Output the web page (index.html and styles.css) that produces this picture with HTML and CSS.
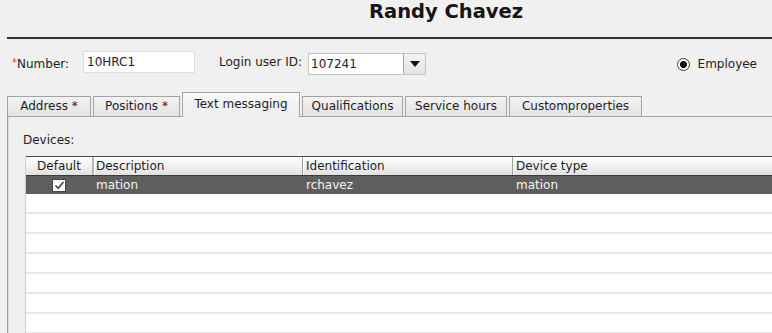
FILE: index.html
```html
<!DOCTYPE html>
<html lang="en">
<head>
	<meta charset="UTF-8">
	<title>Randy Chavez</title>
	<link rel="stylesheet" href="styles.css">
</head>
<body>
<div class="title">Randy Chavez</div>
<div class="rule"></div>

<div class="form-row">
	<label class="field-label num-label"><span class="req">*</span>Number:</label>
	<div class="textbox">10HRC1</div>
	<label class="field-label login-label">Login user ID:</label>
	<div class="combo">
		<span class="combo-text">107241</span>
		<span class="combo-btn"><span class="arrow"></span></span>
	</div>
	<div class="radio-opt"><span class="radio"></span>Employee</div>
</div>

<ul class="tabs">
	<li class="tab tab-address">Address *</li>
	<li class="tab tab-positions">Positions *</li>
	<li class="tab tab-text current">Text messaging</li>
	<li class="tab tab-qual">Qualifications</li>
	<li class="tab tab-hours">Service hours</li>
	<li class="tab tab-custom">Customproperties</li>
</ul>

<div class="panel">
	<div class="devices-label">Devices:</div>
	<div class="grid">
		<div class="grid-head">
			<span class="cell col-default">Default</span>
			<span class="cell">Description</span>
			<span class="cell">Identification</span>
			<span class="cell">Device type</span>
		</div>
		<div class="grid-row selected">
			<span class="cell col-default">
				<span class="checkbox">
					<svg width="11" height="11" viewBox="0 0 11 11"><polyline points="1.5,5.5 4.2,8.2 9.5,2" fill="none" stroke="#333" stroke-width="1.4"/></svg>
				</span>
			</span>
			<span class="cell">mation</span>
			<span class="cell">rchavez</span>
			<span class="cell">mation</span>
		</div>
		<div class="grid-row"></div>
		<div class="grid-row"></div>
		<div class="grid-row"></div>
		<div class="grid-row"></div>
		<div class="grid-row"></div>
		<div class="grid-row"></div>
		<div class="grid-row"></div>
	</div>
</div>
</body>
</html>
```

FILE: styles.css
```css
* {
	margin: 0;
	padding: 0;
	box-sizing: border-box;
}

ul {
	list-style: none;
}

body {
	width: 772px;
	height: 333px;
	overflow: hidden;
	background: #f0f0f0;
	color: #1e1e1e;
	font-family: "DejaVu Sans", "Liberation Sans", sans-serif;
	font-size: 12px;
}

/* header */
.title {
	height: 37px;
	padding-left: 369px;
	font-size: 19.5px;
	font-weight: bold;
	line-height: 23px;
	color: #151515;
}

.rule {
	height: 2px;
	margin-left: 7px;
	background: #333;
}

/* number / login row */
.form-row {
	display: flex;
	align-items: flex-start;
	height: 23px;
	margin-top: 12px;
	padding: 0 15px 0 12px;
}

.field-label {
	line-height: 23px;
	white-space: nowrap;
}

.num-label {
	width: 71px;
}

.req {
	color: #e23c3c;
	font-size: 10px;
	vertical-align: 2px;
}

.textbox {
	width: 112px;
	height: 22px;
	padding-left: 3px;
	line-height: 20px;
	background: #fff;
	border: 1px solid #dedede;
}

.login-label {
	width: 89px;
	margin-left: 24px;
}

.combo {
	display: flex;
	width: 118px;
	height: 22px;
	margin-top: 2px;
	background: #fff;
	border: 1px solid #c4c4c4;
}

.combo-text {
	flex: 1;
	padding-left: 2px;
	line-height: 20px;
}

.combo-btn {
	display: flex;
	align-items: center;
	justify-content: center;
	width: 22px;
	background: linear-gradient(#f4f4f4, #e2e2e2);
	border-left: 1px solid #a8a8a8;
}

.arrow {
	width: 0;
	height: 0;
	border-left: 5px solid transparent;
	border-right: 5px solid transparent;
	border-top: 6px solid #111;
}

.radio-opt {
	display: flex;
	align-items: center;
	gap: 8px;
	margin-left: auto;
	margin-top: 3px;
	line-height: 20px;
}

.radio {
	width: 13px;
	height: 13px;
	border: 1px solid #3a3a3a;
	border-radius: 50%;
	background: radial-gradient(circle, #111 0, #111 3.2px, #fff 3.8px);
}

/* tabs */
.tabs {
	display: flex;
	align-items: flex-end;
	gap: 2px;
	height: 24px;
	margin-top: 18px;
	padding-left: 7px;
}

.tab {
	height: 20px;
	line-height: 18px;
	text-align: center;
	white-space: nowrap;
	background: linear-gradient(#f3f3f3, #e3e3e3);
	border: 1px solid #a3a3a3;
	border-bottom: none;
}

.tab.current {
	position: relative;
	z-index: 1;
	height: 25px;
	margin-bottom: -1px;
	line-height: 22px;
	background: linear-gradient(#fafafa, #f0f0f0 60%);
}

.tab-address { width: 84px; }
.tab-positions { width: 87px; }
.tab-text { width: 118px; }
.tab-qual { width: 101px; }
.tab-hours { width: 102px; }
.tab-custom { width: 133px; }

/* panel */
.panel {
	height: 217px;
	margin-left: 7px;
	border-top: 1px solid #a3a3a3;
	border-left: 1px solid #9a9a9a;
	box-shadow: inset 1px 0 #dcdcdc;
	overflow: hidden;
}

.devices-label {
	margin: 15px 0 0 15px;
	line-height: 16px;
}

.grid {
	width: 780px;
	margin: 8px 0 0 17px;
	border-left: 1px solid #c9c9d6;
}

.grid-head,
.grid-row {
	display: grid;
	grid-template-columns: 66px 210px 210px 1fr;
}

.grid-head {
	height: 20px;
	background: linear-gradient(#fefefe, #f2f2f2 50%, #e0e0e0);
	border-top: 1px solid #4a4a4a;
	border-bottom: 1px solid #3c3c3c;
}

.cell {
	padding-left: 3px;
	line-height: 18px;
	white-space: nowrap;
	overflow: hidden;
}

.grid-head .cell {
	border-left: 1px solid #9d9d9d;
	box-shadow: inset 1px 0 #fff;
	padding-left: 3px;
}

.grid-head .col-default {
	border-left: none;
	box-shadow: none;
	padding-left: 0;
	text-align: center;
}

.grid-head .cell:nth-child(2) {
	border-left: 2px solid #b4b4b4;
	padding-left: 2px;
}

.grid-row {
	height: 20px;
	background: #fff;
	border-bottom: 2px solid #e7e7e7;
}

.grid-row.selected {
	height: 18px;
	background: #5e5e5e;
	color: #f4f4f4;
	border-bottom: none;
}

.grid-row .cell {
	padding-left: 4px;
}

.grid-row .col-default {
	display: flex;
	align-items: center;
	justify-content: center;
	padding-left: 0;
}

.checkbox {
	display: flex;
	align-items: center;
	justify-content: center;
	width: 14px;
	height: 13px;
	background: #fff;
	border: 1px solid #474747;
}
```
